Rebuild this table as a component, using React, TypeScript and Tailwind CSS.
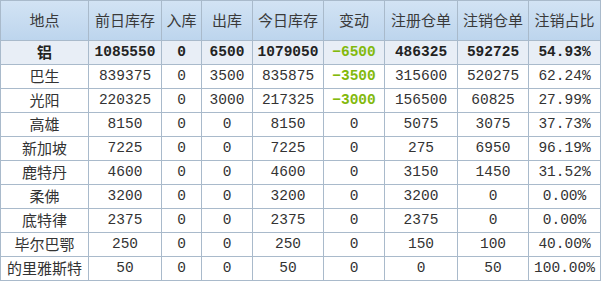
import React from "react";

const headers = ["地点", "前日库存", "入库", "出库", "今日库存", "变动", "注册仓单", "注销仓单", "注销占比"];

const rows = [
  ["巴生", "839375", "0", "3500", "835875", "-3500", "315600", "520275", "62.24%"],
  ["光阳", "220325", "0", "3000", "217325", "-3000", "156500", "60825", "27.99%"],
  ["高雄", "8150", "0", "0", "8150", "0", "5075", "3075", "37.73%"],
  ["新加坡", "7225", "0", "0", "7225", "0", "275", "6950", "96.19%"],
  ["鹿特丹", "4600", "0", "0", "4600", "0", "3150", "1450", "31.52%"],
  ["柔佛", "3200", "0", "0", "3200", "0", "3200", "0", "0.00%"],
  ["底特律", "2375", "0", "0", "2375", "0", "2375", "0", "0.00%"],
  ["毕尔巴鄂", "250", "0", "0", "250", "0", "150", "100", "40.00%"],
  ["的里雅斯特", "50", "0", "0", "50", "0", "0", "50", "100.00%"],
];

const total = ["铝", "1085550", "0", "6500", "1079050", "-6500", "486325", "592725", "54.93%"];

const grid =
  "grid grid-cols-[88px_73px_40px_51px_71px_61px_73px_71px_72px]";
const cell =
  "flex items-center justify-center border-l border-t border-[#a9bacb] whitespace-nowrap";
const mono = "font-['Liberation_Mono','Noto_Sans_CJK_SC',monospace] text-[14.5px]";

// negative changes are shown in green, bold
const Value = ({ v, i }: { v: string; i: number }) => {
  const green = i === 5 && v.startsWith("-");
  return (
    <span className={green ? "text-[#82b90c] font-bold" : ""}>{v.replace("-", "−")}</span>
  );
};

export default function App() {
  return (
    <div className="w-[601px] h-[281px] bg-white text-[#333] text-[14px] font-['Noto_Sans_CJK_SC',sans-serif]">
      <div className={`${grid} border-r border-b border-[#a9bacb]`}>
        {headers.map((h) => (
          <div
            key={h}
            className={`${cell} h-[40px] bg-gradient-to-b from-[#d2e3f4] to-[#bdd5ed] text-[15px] text-[#3a3a3a]`}
          >
            {h}
          </div>
        ))}
        {total.map((v, i) => (
          <div
            key={"t" + i}
            className={`${cell} h-[24px] bg-[#e8eef6] font-bold text-[#222] ${i === 0 ? "text-[15px]" : mono}`}
          >
            <Value v={v} i={i} />
          </div>
        ))}
        {rows.map((r, ri) =>
          r.map((v, i) => (
            <div
              key={ri + "-" + i}
              className={`${cell} h-[24px] ${i === 0 ? "text-[15px]" : mono}`}
            >
              <Value v={v} i={i} />
            </div>
          ))
        )}
      </div>
    </div>
  );
}
